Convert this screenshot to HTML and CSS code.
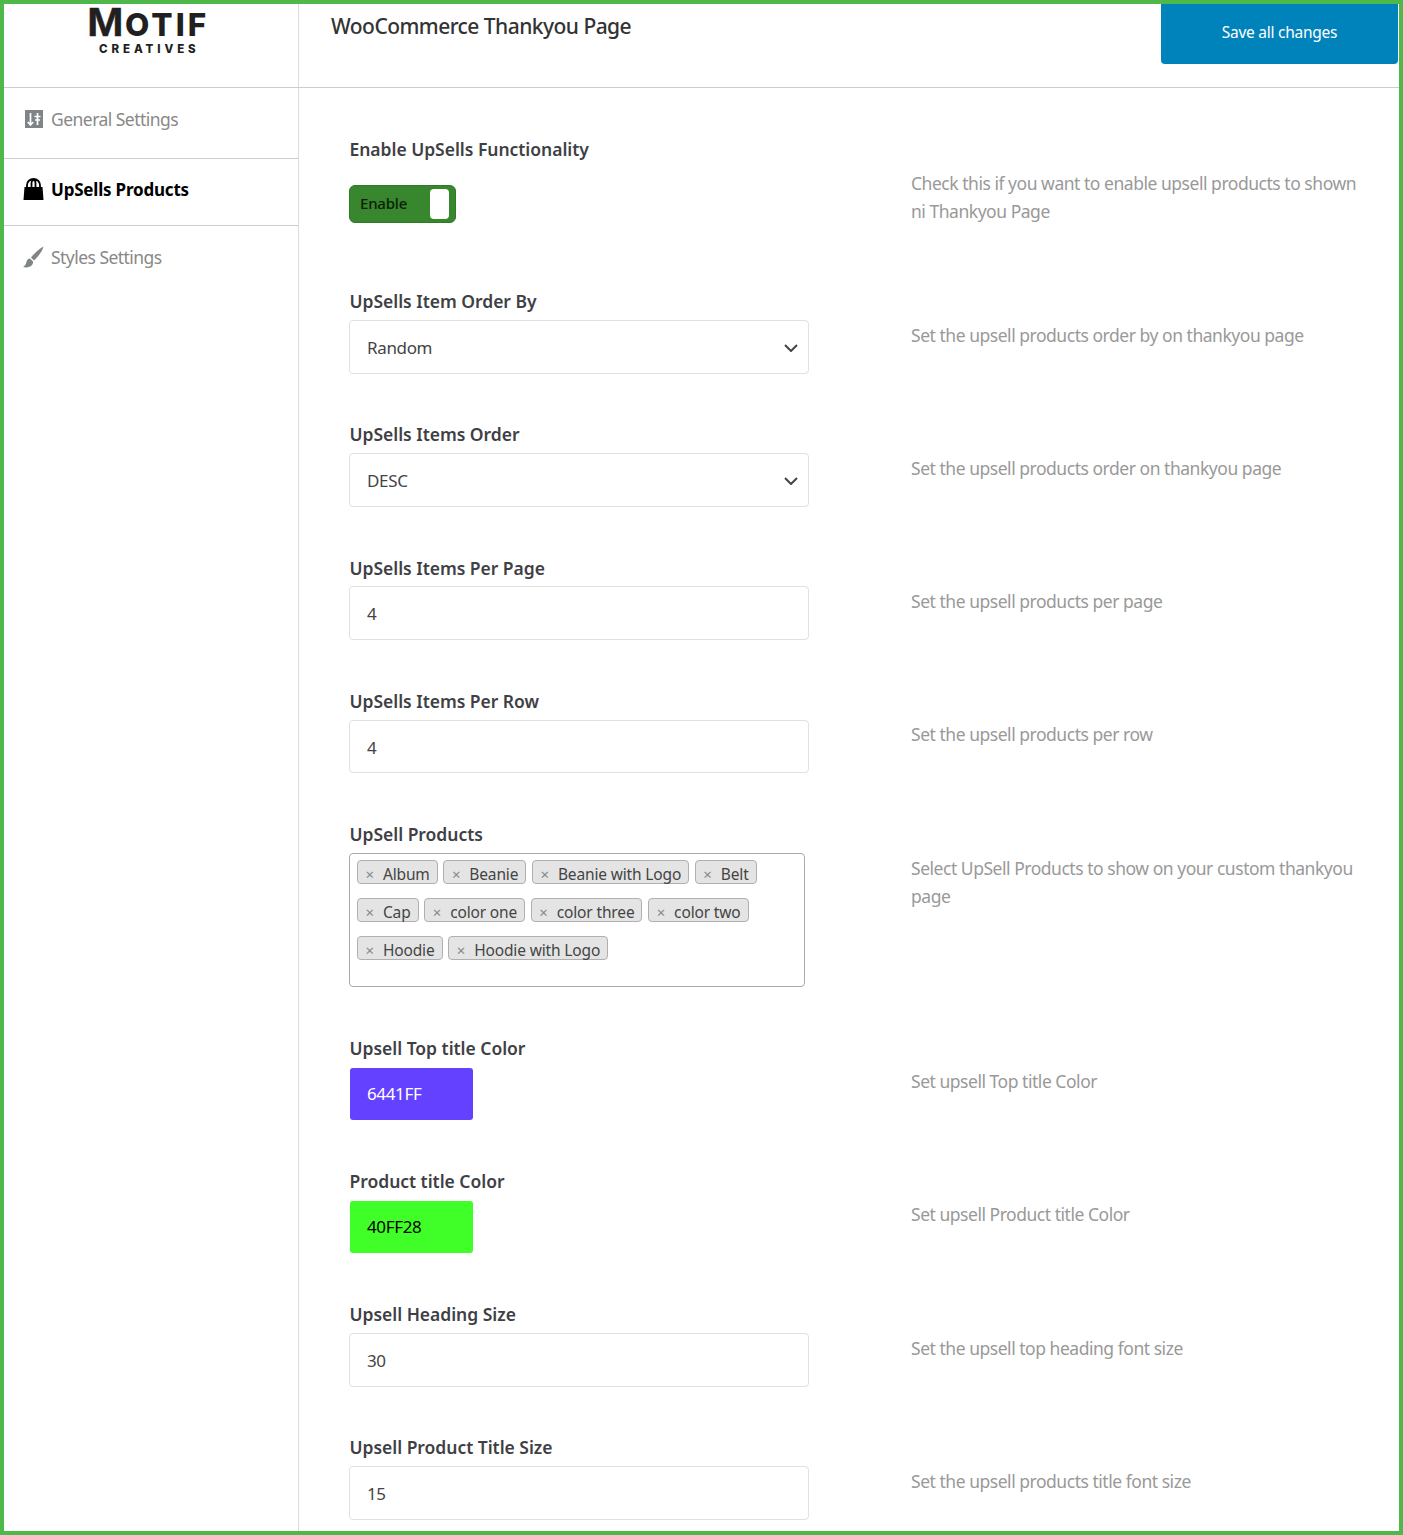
FILE: index.html
```html
<!DOCTYPE html>
<html lang="en">
<head>
<meta charset="utf-8">
<title>WooCommerce Thankyou Page</title>
<link rel="stylesheet" href="styles.css">
</head>
<body>
<div class="frame">
  <header class="topbar">
    <div class="logo">
      <div class="logo-main"><span class="logo-m">M</span><span class="logo-rest">OTIF</span></div>
      <div class="logo-sub">CREATIVES</div>
    </div>
    <h1 class="page-title">WooCommerce Thankyou Page</h1>
    <button class="save" type="button">Save all changes</button>
  </header>
  <div class="body">
    <nav class="sidebar">
      <a class="nav-item nav-general">
        <svg class="nav-icon" viewBox="0 0 20 20"><rect x="1" y="1" width="18" height="18" fill="#7f8487"/><path d="M6.500 4v12M3.800 13 6.500 16 9.200 13M13.500 4v12M10.500 7.500h6M11 11h5" stroke="#fff" stroke-width="1.700" fill="none"/></svg>
        <span>General Settings</span>
      </a>
      <a class="nav-item nav-active">
        <svg class="nav-icon nav-icon-lg" viewBox="0 0 21 22"><path d="M1.500 9h18l1 13H.500z" fill="#000"/><path d="M4 10V7a6.500 6 0 0 1 13 0v3M8.500 10V5a2 3 0 0 1 4 0v5" fill="none" stroke="#000" stroke-width="1.800"/></svg>
        <span>UpSells Products</span>
      </a>
      <a class="nav-item nav-styles">
        <svg class="nav-icon nav-icon-lg" viewBox="0 0 21 22"><path d="M20.500.500C16.500 2.500 11 7.500 8 11.500l3 3C15 11 19.500 5 20.500.500z" fill="#7f8487"/><path d="M7 12.500c-2.800.4-3.200 2.200-3.700 4.200-.4 1.600-1.600 3.200-3.300 4.300 3 .8 7 .4 8.800-1.700 1.200-1.400 1.400-2.700 1.200-3.800z" fill="#7f8487"/></svg>
        <span>Styles Settings</span>
      </a>
    </nav>
    <main class="content">
      <section class="row row-toggle">
        <div class="field">
          <label class="label">Enable UpSells Functionality</label>
          <div class="toggle"><span class="toggle-text">Enable</span><span class="toggle-thumb"></span></div>
        </div>
        <p class="desc">Check this if you want to enable upsell products to shown ni Thankyou Page</p>
      </section>
      <section class="row">
        <div class="field">
          <label class="label">UpSells Item Order By</label>
          <div class="control select">Random<svg class="chevron" viewBox="0 0 14 8"><path d="M1 1l6 6 6-6" fill="none" stroke="#444" stroke-width="2"/></svg></div>
        </div>
        <p class="desc">Set the upsell products order by on thankyou page</p>
      </section>
      <section class="row">
        <div class="field">
          <label class="label">UpSells Items Order</label>
          <div class="control select">DESC<svg class="chevron" viewBox="0 0 14 8"><path d="M1 1l6 6 6-6" fill="none" stroke="#444" stroke-width="2"/></svg></div>
        </div>
        <p class="desc">Set the upsell products order on thankyou page</p>
      </section>
      <section class="row">
        <div class="field">
          <label class="label">UpSells Items Per Page</label>
          <div class="control">4</div>
        </div>
        <p class="desc">Set the upsell products per page</p>
      </section>
      <section class="row">
        <div class="field">
          <label class="label">UpSells Items Per Row</label>
          <div class="control">4</div>
        </div>
        <p class="desc">Set the upsell products per row</p>
      </section>
      <section class="row row-tags">
        <div class="field">
          <label class="label">UpSell Products</label>
          <div class="tags">
            <span class="tag"><i>×</i>Album</span><span class="tag"><i>×</i>Beanie</span><span class="tag"><i>×</i>Beanie with Logo</span><span class="tag"><i>×</i>Belt</span>
            <span class="tag"><i>×</i>Cap</span><span class="tag"><i>×</i>color one</span><span class="tag"><i>×</i>color three</span><span class="tag"><i>×</i>color two</span>
            <span class="tag"><i>×</i>Hoodie</span><span class="tag"><i>×</i>Hoodie with Logo</span>
          </div>
        </div>
        <p class="desc">Select UpSell Products to show on your custom thankyou page</p>
      </section>
      <section class="row">
        <div class="field">
          <label class="label">Upsell Top title Color</label>
          <div class="swatch swatch-purple">6441FF</div>
        </div>
        <p class="desc">Set upsell Top title Color</p>
      </section>
      <section class="row">
        <div class="field">
          <label class="label">Product title Color</label>
          <div class="swatch swatch-green">40FF28</div>
        </div>
        <p class="desc">Set upsell Product title Color</p>
      </section>
      <section class="row">
        <div class="field">
          <label class="label">Upsell Heading Size</label>
          <div class="control">30</div>
        </div>
        <p class="desc">Set the upsell top heading font size</p>
      </section>
      <section class="row">
        <div class="field">
          <label class="label">Upsell Product Title Size</label>
          <div class="control">15</div>
        </div>
        <p class="desc">Set the upsell products title font size</p>
      </section>
    </main>
  </div>
</div>
</body>
</html>
```
FILE: styles.css
```css
* { box-sizing: border-box; }
html, body { margin: 0; padding: 0; background: #fff; }
body {
  font-family: "Noto Sans", "Open Sans", sans-serif;
  font-size: 17px;
  letter-spacing: -0.35px;
  color: #444;
}
.frame {
  width: 1403px;
  height: 1535px;
  border: 4px solid #4fb84b;
  overflow: hidden;
  display: flex;
  flex-direction: column;
}
.topbar {
  height: 84px;
  flex: none;
  display: flex;
  border-bottom: 1px solid #ccc;
}
.logo {
  width: 295px;
  flex: none;
  border-right: 1px solid #ddd;
  padding: 0 0 0 83px;
  color: #231f20;
  letter-spacing: 0;
}
.logo-main {
  display: flex;
  align-items: baseline;
  height: 38px;
  line-height: 36px;
}
.logo-m {
  display: inline-block;
  font-family: "Liberation Sans", sans-serif;
  font-weight: 700;
  font-size: 40px;
  line-height: 36px;
  width: 38px;
  transform: scaleX(1.1);
  transform-origin: left center;
  -webkit-text-stroke: 0.4px #231f20;
}
.logo-rest {
  font-family: Inter, sans-serif;
  font-weight: 800;
  font-size: 31.500px;
  line-height: 36px;
  letter-spacing: 3px;
}
.logo-sub {
  font-family: Inter, sans-serif;
  font-weight: 800;
  font-size: 11.500px;
  line-height: 14px;
  letter-spacing: 3.900px;
  margin: 0 0 0 12px;
}
.page-title {
  margin: 7px 0 0 32px;
  font-size: 21px;
  line-height: 30px;
  font-weight: 500;
  letter-spacing: -0.54px;
  color: #333;
  flex: 1;
}
.save {
  width: 237px;
  height: 60px;
  flex: none;
  margin-right: 1px;
  border: 0;
  border-radius: 0 0 4px 4px;
  background: #0083bb;
  color: #fff;
  font: inherit;
  font-size: 15.500px;
  letter-spacing: -0.26px;
  padding: 0 0 4px;
}
.body { flex: 1; display: flex; min-height: 0; }
.sidebar {
  width: 295px;
  flex: none;
  border-right: 1px solid #ddd;
}
.nav-item {
  display: flex;
  align-items: center;
  gap: 7px;
  padding-left: 20px;
  color: #888;
  border-bottom: 1px solid #ccc;
  font-size: 17.500px;
  letter-spacing: -0.54px;
}
.nav-general { height: 71px; padding-bottom: 8px; }
.nav-active { height: 67px; padding-bottom: 6px; color: #000; font-weight: 700; font-size: 17px; letter-spacing: -0.2px; }
.nav-styles { height: 62px; border-bottom: 0; }
.nav-icon { width: 20px; height: 20px; flex: none; }
.nav-icon-lg { width: 21px; height: 22px; margin-left: -1px; }
.content { flex: 1; padding: 49px 0 0 50px; }
.row {
  display: flex;
  height: 133.300px;
}
.row-toggle { height: 152px; }
.row-tags { height: 213.400px; }
.field { width: 460px; flex: none; }
.label {
  display: block;
  height: 24px;
  line-height: 24px;
  margin-bottom: 6.800px;
  font-size: 17.500px;
  font-weight: 600;
  letter-spacing: -0.03px;
  color: #3f3f46;
  padding-left: 0.500px;
}
.desc {
  margin: 31.500px 0 0 102px;
  width: 460px;
  line-height: 28px;
  color: #999;
  font-size: 17.500px;
  letter-spacing: -0.47px;
}
.toggle {
  margin-top: 24.200px;
  width: 107px;
  height: 38px;
  background: #38862d;
  border: 1px solid #2f7a26;
  border-radius: 6px;
  display: flex;
  align-items: center;
  justify-content: space-between;
  padding: 0 6px 0 10px;
}
.toggle-text { font-size: 15px; font-weight: 500; letter-spacing: -0.2px; color: #0b2008; line-height: 20px; margin-top: -2px; }
.toggle-thumb { width: 19px; height: 30px; background: #fff; border-radius: 4px; }
.control {
  position: relative;
  width: 460px;
  height: 53.750px;
  border: 1px solid #e1e1e1;
  border-radius: 4px;
  padding-left: 17px;
  line-height: 53px;
  color: #444;
}
.chevron { position: absolute; right: 10px; top: 23px; width: 14px; height: 8px; }
.tags {
  width: 456px;
  height: 134px;
  border: 1px solid #aaa;
  border-radius: 4px;
  padding: 6px 0 0 7px;
  font-size: 0;
  letter-spacing: 0;
  line-height: 0;
}
.tag {
  display: inline-block;
  height: 24px;
  line-height: 26px;
  margin: 0 5.700px 14px 0;
  padding: 0 7px 0 7.500px;
  background: #e4e4e4;
  border: 1px solid #b0b0b0;
  border-radius: 4px;
  font-size: 15.500px;
  letter-spacing: -0.15px;
  color: #444;
}
.tag i {
  font-style: normal;
  color: #888;
  font-size: 15px;
  margin-right: 9px;
}
.swatch {
  width: 123px;
  height: 51.500px;
  margin: 8.500px 0 0 1px;
  border-radius: 3px;
  padding-left: 17px;
  line-height: 52px;
}
.swatch-purple { background: #6441ff; color: #fff; }
.swatch-green { background: #40ff28; color: #000; }
```
